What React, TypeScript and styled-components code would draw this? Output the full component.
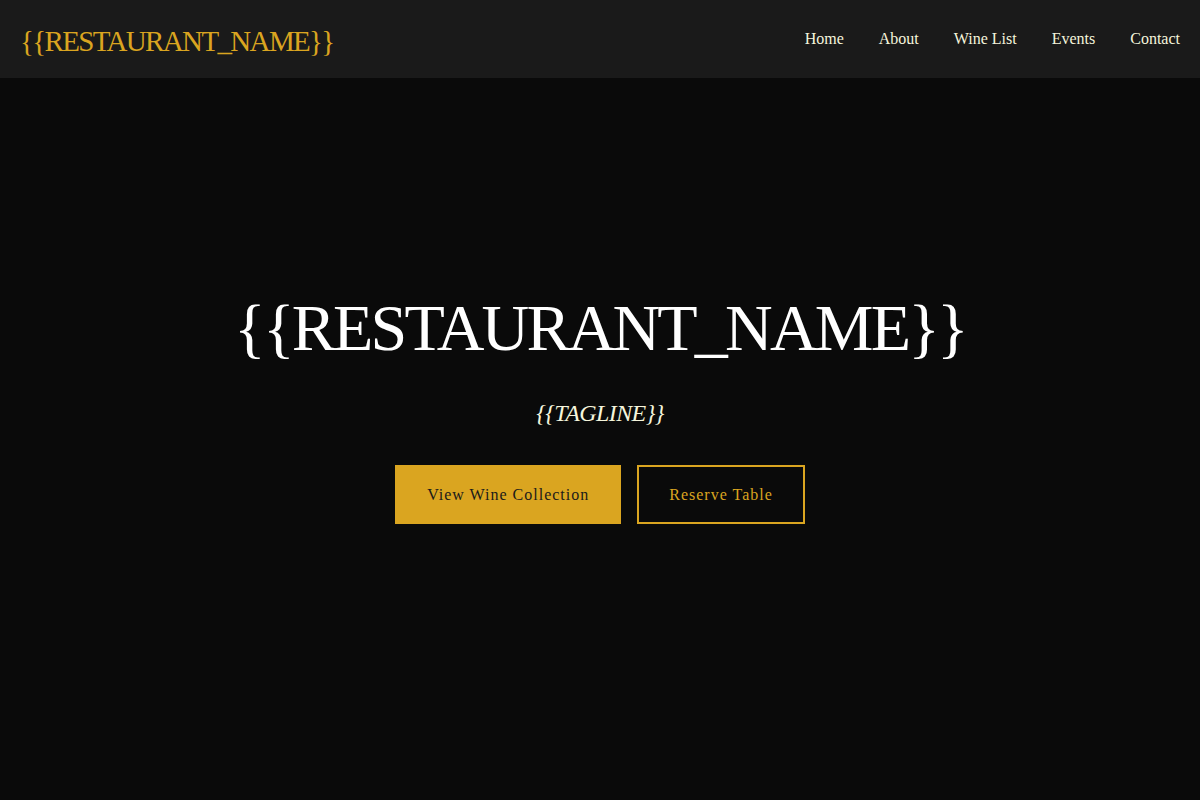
import React from 'react'
import styled, {createGlobalStyle} from 'styled-components'

const GlobalStyle = createGlobalStyle`
  * {box-sizing:border-box; margin:0; padding:0;}
  html, body {height:100%; background-color:#0a0a0a;}
  body {font-family:"Liberation Serif", "Times New Roman", serif; color:#f5f5dc;}
`

const Page = styled.div`
  display:flex; flex-direction:column; height:100vh; background-color:#0a0a0a;
`

const Header = styled.header`
  display:flex; justify-content:space-between; align-items:center; height:78px; padding:0 20px; background-color:#1a1a1a; flex-shrink:0;
`

const Logo = styled.a`
  font-size:29px; letter-spacing:-1.65px; color:#daa520; text-decoration:none; line-height:1; padding-top:4px;
`

const Nav = styled.ul`
  display:flex; gap:35px; list-style:none;
  a {font-size:16px; color:#f5f5dc; text-decoration:none; font-weight:500;}
`

const Hero = styled.section`
  flex:1; display:flex; flex-direction:column; align-items:center; justify-content:center; padding-bottom:60px; text-align:center;
`

const Title = styled.h1`
  font-size:66px; font-weight:400; line-height:1; letter-spacing:-2.8px; color:#ffffff;
`

const Tagline = styled.p`
  margin-top:40px; font-size:24px; font-style:italic; letter-spacing:-0.6px; line-height:1; color:#f5f5dc;
`

const Actions = styled.div`
  display:flex; gap:16px; margin-top:40px;
`

const Button = styled.a<{$outline?: boolean}>`
  display:inline-block; padding:16px 30px; font-size:16px; line-height:23px; letter-spacing:1px; text-decoration:none;
  border:2px solid ${p => p.$outline ? '#daa520' : 'transparent'};
  background-color:${p => p.$outline ? 'transparent' : '#daa520'};
  color:${p => p.$outline ? '#daa520' : '#1a1a1a'};
`

const links = ['Home', 'About', 'Wine List', 'Events', 'Contact']

const App: React.FC = () => {
  return (
    <>
      <GlobalStyle/>
      <Page>
        <Header>
          <Logo href="#">{'{{RESTAURANT_NAME}}'}</Logo>
          <Nav>
            {links.map((item) => <li key={item}><a href="#">{item}</a></li>)}
          </Nav>
        </Header>

        <Hero>
          <Title>{'{{RESTAURANT_NAME}}'}</Title>
          <Tagline>{'{{TAGLINE}}'}</Tagline>
          <Actions>
            <Button href="#">View Wine Collection</Button>
            <Button href="#" $outline>Reserve Table</Button>
          </Actions>
        </Hero>
      </Page>
    </>
  )
}

export default App
